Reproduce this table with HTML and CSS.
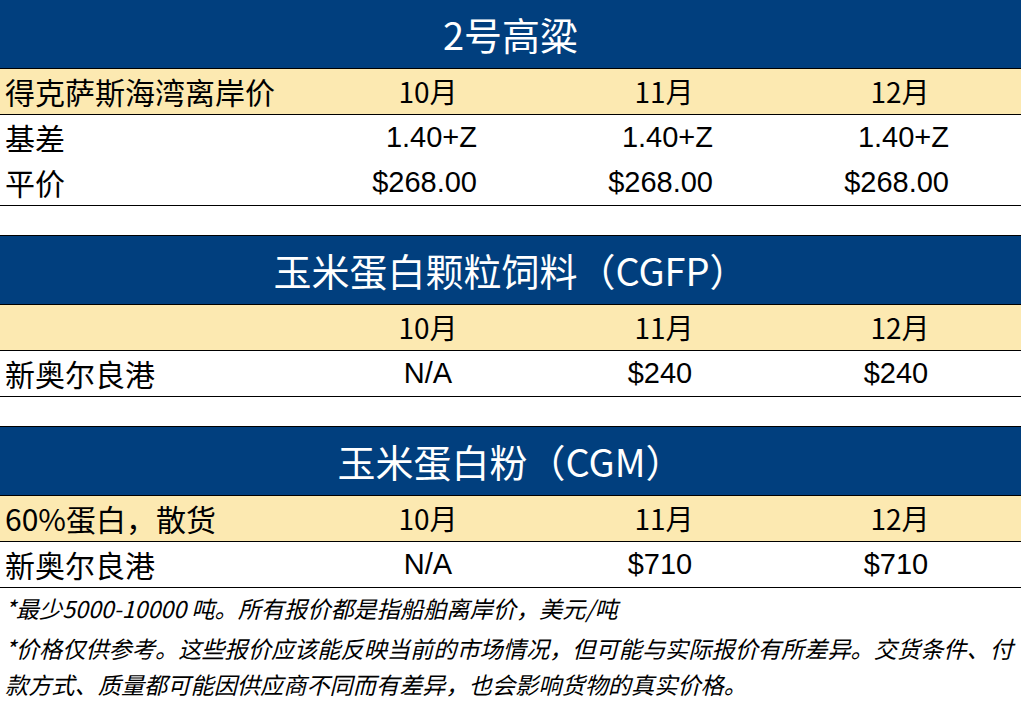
FILE: index.html
```html
<!DOCTYPE html>
<html lang="zh-CN">
<head>
<meta charset="utf-8">
<title>报价</title>
<link rel="stylesheet" href="styles.css">
</head>
<body>
<div class="page">
  <section class="table first">
    <div class="band">2号高粱</div>
    <div class="row sub">
      <div class="lab">得克萨斯海湾离岸价</div>
      <div class="mon">10月</div>
      <div class="mon">11月</div>
      <div class="mon">12月</div>
    </div>
    <div class="row plain nob">
      <div class="lab">基差</div>
      <div class="val">1.40+Z</div>
      <div class="val">1.40+Z</div>
      <div class="val">1.40+Z</div>
    </div>
    <div class="row plain">
      <div class="lab">平价</div>
      <div class="val">$268.00</div>
      <div class="val">$268.00</div>
      <div class="val">$268.00</div>
    </div>
  </section>

  <section class="table">
    <div class="band">玉米蛋白颗粒饲料（CGFP）</div>
    <div class="row sub">
      <div class="lab"></div>
      <div class="mon">10月</div>
      <div class="mon">11月</div>
      <div class="mon">12月</div>
    </div>
    <div class="row plain">
      <div class="lab">新奥尔良港</div>
      <div class="cen">N/A</div>
      <div class="cen num">$240</div>
      <div class="cen num">$240</div>
    </div>
  </section>

  <section class="table">
    <div class="band">玉米蛋白粉（CGM）</div>
    <div class="row sub">
      <div class="lab">60%蛋白，散货</div>
      <div class="mon">10月</div>
      <div class="mon">11月</div>
      <div class="mon">12月</div>
    </div>
    <div class="row plain">
      <div class="lab">新奥尔良港</div>
      <div class="cen">N/A</div>
      <div class="cen num">$710</div>
      <div class="cen num">$710</div>
    </div>
  </section>

  <div class="notes">
    <p class="note">*最少5000-10000 吨。所有报价都是指船舶离岸价，美元/吨</p>
    <p class="note">*价格仅供参考。这些报价应该能反映当前的市场情况，但可能与实际报价有所差异。交货条件、付款方式、质量都可能因供应商不同而有差异，也会影响货物的真实价格。</p>
  </div>
</div>
</body>
</html>
```

FILE: styles.css
```css
html, body {
  margin: 0;
  padding: 0;
  background: #ffffff;
}

.page {
  width: 1021px;
  display: flex;
  flex-direction: column;
  gap: 29px;
  font-family: "Noto Sans CJK SC", "Noto Sans", sans-serif;
  color: #000;
}

.table {
  display: flex;
  flex-direction: column;
  border-top: 1px solid #000;
}

.table.first {
  border-top: none;
}

.band {
  height: 68px;
  background: #013f7e;
  color: #ffffff;
  font-size: 38px;
  line-height: 68px;
  text-align: center;
  border-bottom: 1px solid #000;
}

.row {
  display: grid;
  grid-template-columns: 310px 236px 236px 236px;
  align-items: center;
  height: 45px;
  border-bottom: 1px solid #000;
}

.row.nob {
  border-bottom: none;
}

.sub {
  background: #fce9b1;
}

.lab {
  padding-left: 5px;
  font-size: 30px;
  line-height: 45px;
  white-space: nowrap;
}

.mon {
  text-align: center;
  font-size: 28px;
  line-height: 45px;
}

.val {
  text-align: right;
  padding-right: 69px;
  font-family: "Liberation Sans", Arial, sans-serif;
  font-size: 29px;
  line-height: 45px;
}

.cen {
  text-align: center;
  font-family: "Liberation Sans", Arial, sans-serif;
  font-size: 29px;
  line-height: 45px;
}

.cen.num {
  padding-right: 8px;
}

.notes {
  margin-top: -27px;
  padding: 0 0 0 5px;
  display: flex;
  flex-direction: column;
  gap: 4px;
}

.note {
  margin: 0;
  font-size: 23.2px;
  line-height: 36px;
  font-style: italic;
}
```
